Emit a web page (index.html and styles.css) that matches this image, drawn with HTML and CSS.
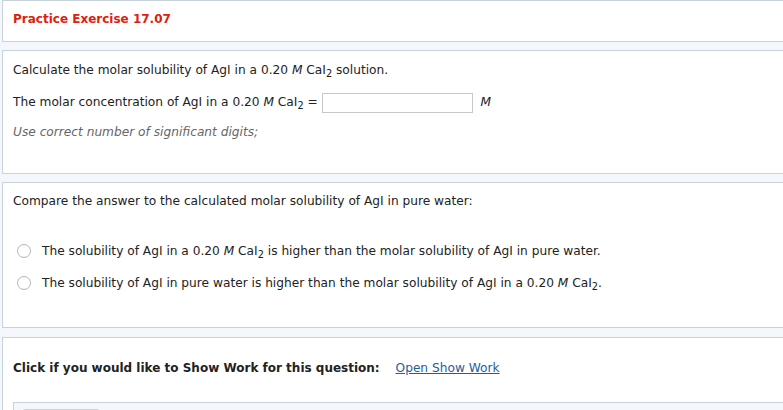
FILE: index.html
```html
<!DOCTYPE html>
<html lang="en">
<head>
    <meta charset="UTF-8">
    <title>Practice Exercise 17.07</title>
    <link rel="stylesheet" href="styles.css">
</head>
<body>
    <div class="panel title-panel">
        <h1>Practice Exercise 17.07</h1>
    </div>

    <div class="panel question">
        <p>Calculate the molar solubility of AgI in a 0.20 <i>M</i> CaI<sub>2</sub> solution.</p>
        <p class="answer-row">
            The molar concentration of AgI in a 0.20 <i>M</i> CaI<sub>2</sub> =
            <input type="text" class="answer">
            <i class="unit">M</i>
        </p>
        <p class="hint">Use correct number of significant digits;</p>
    </div>

    <div class="panel compare">
        <p>Compare the answer to the calculated molar solubility of AgI in pure water:</p>
        <ul class="choices">
            <li><span class="radio"></span>The solubility of AgI in a 0.20 <i>M</i> CaI<sub>2</sub> is higher than the molar solubility of AgI in pure water.</li>
            <li><span class="radio"></span>The solubility of AgI in pure water is higher than the molar solubility of AgI in a 0.20 <i>M</i> CaI<sub>2</sub>.</li>
        </ul>
    </div>

    <div class="panel show-work">
        <p><b>Click if you would like to Show Work for this question:</b> <a href="#">Open Show Work</a></p>
        <div class="work-box">
            <span class="work-btn"></span>
        </div>
    </div>
</body>
</html>
```

FILE: styles.css
```css
* {
    box-sizing: border-box;
}

html {
    overflow: hidden;
}

body {
    font-family: "DejaVu Sans", Verdana, sans-serif;
    font-size: 12.2px;
    color: #222;
    margin: 0;
    padding: 0 0 0 2px;
    background-color: #f4f7fb;
}

.panel {
    background-color: #fff;
    border: 1px solid #c9d3dd;
    width: 820px;
    padding: 0 10px;
    margin-bottom: 8px;
}

.panel p {
    margin: 0;
}

sub {
    font-size: 0.8em;
    line-height: 0;
    vertical-align: -0.3em;
}

.title-panel {
    height: 42px;
}

.title-panel h1 {
    color: #e0200e;
    font-size: 12px;
    margin: 0;
    line-height: 36px;
}

.question {
    height: 124px;
    padding-top: 10px;
}

.question p {
    line-height: 18px;
    margin-bottom: 13px;
}

.question .answer-row {
    line-height: 20px;
    margin-bottom: 10px;
}

.answer {
    width: 151px;
    height: 20px;
    border: 1px solid #c8c8c8;
    margin: 0 4px 0 0;
    padding: 1px 2px;
    vertical-align: middle;
}

.hint {
    color: #666;
    font-style: italic;
}

.compare {
    height: 146px;
    margin-bottom: 9px;
    padding-top: 9px;
}

.compare p {
    line-height: 18px;
}

.choices {
    list-style: none;
    margin: 32px 0 0;
    padding: 0 0 0 4px;
}

.choices li {
    line-height: 18px;
    margin-bottom: 14px;
}

.radio {
    display: inline-block;
    width: 14px;
    height: 14px;
    border: 1px solid #b4b4b4;
    border-radius: 50%;
    margin-right: 11px;
    vertical-align: -3px;
    background: #fff;
}

.show-work {
    height: 120px;
    padding-top: 21px;
}

.show-work p {
    line-height: 18px;
}

.show-work b {
    font-size: 12px;
}

.show-work a {
    color: #1f5e9c;
    margin-left: 12px;
}

.work-box {
    margin-top: 25px;
    height: 60px;
    background-color: #f4f7fb;
    border: 1px solid #c9d3dd;
    padding: 6px 8px;
}

.work-btn {
    display: block;
    width: 78px;
    height: 20px;
    border: 1px solid #c9d3dd;
    border-radius: 3px;
    background: #e9eef3;
}
```
